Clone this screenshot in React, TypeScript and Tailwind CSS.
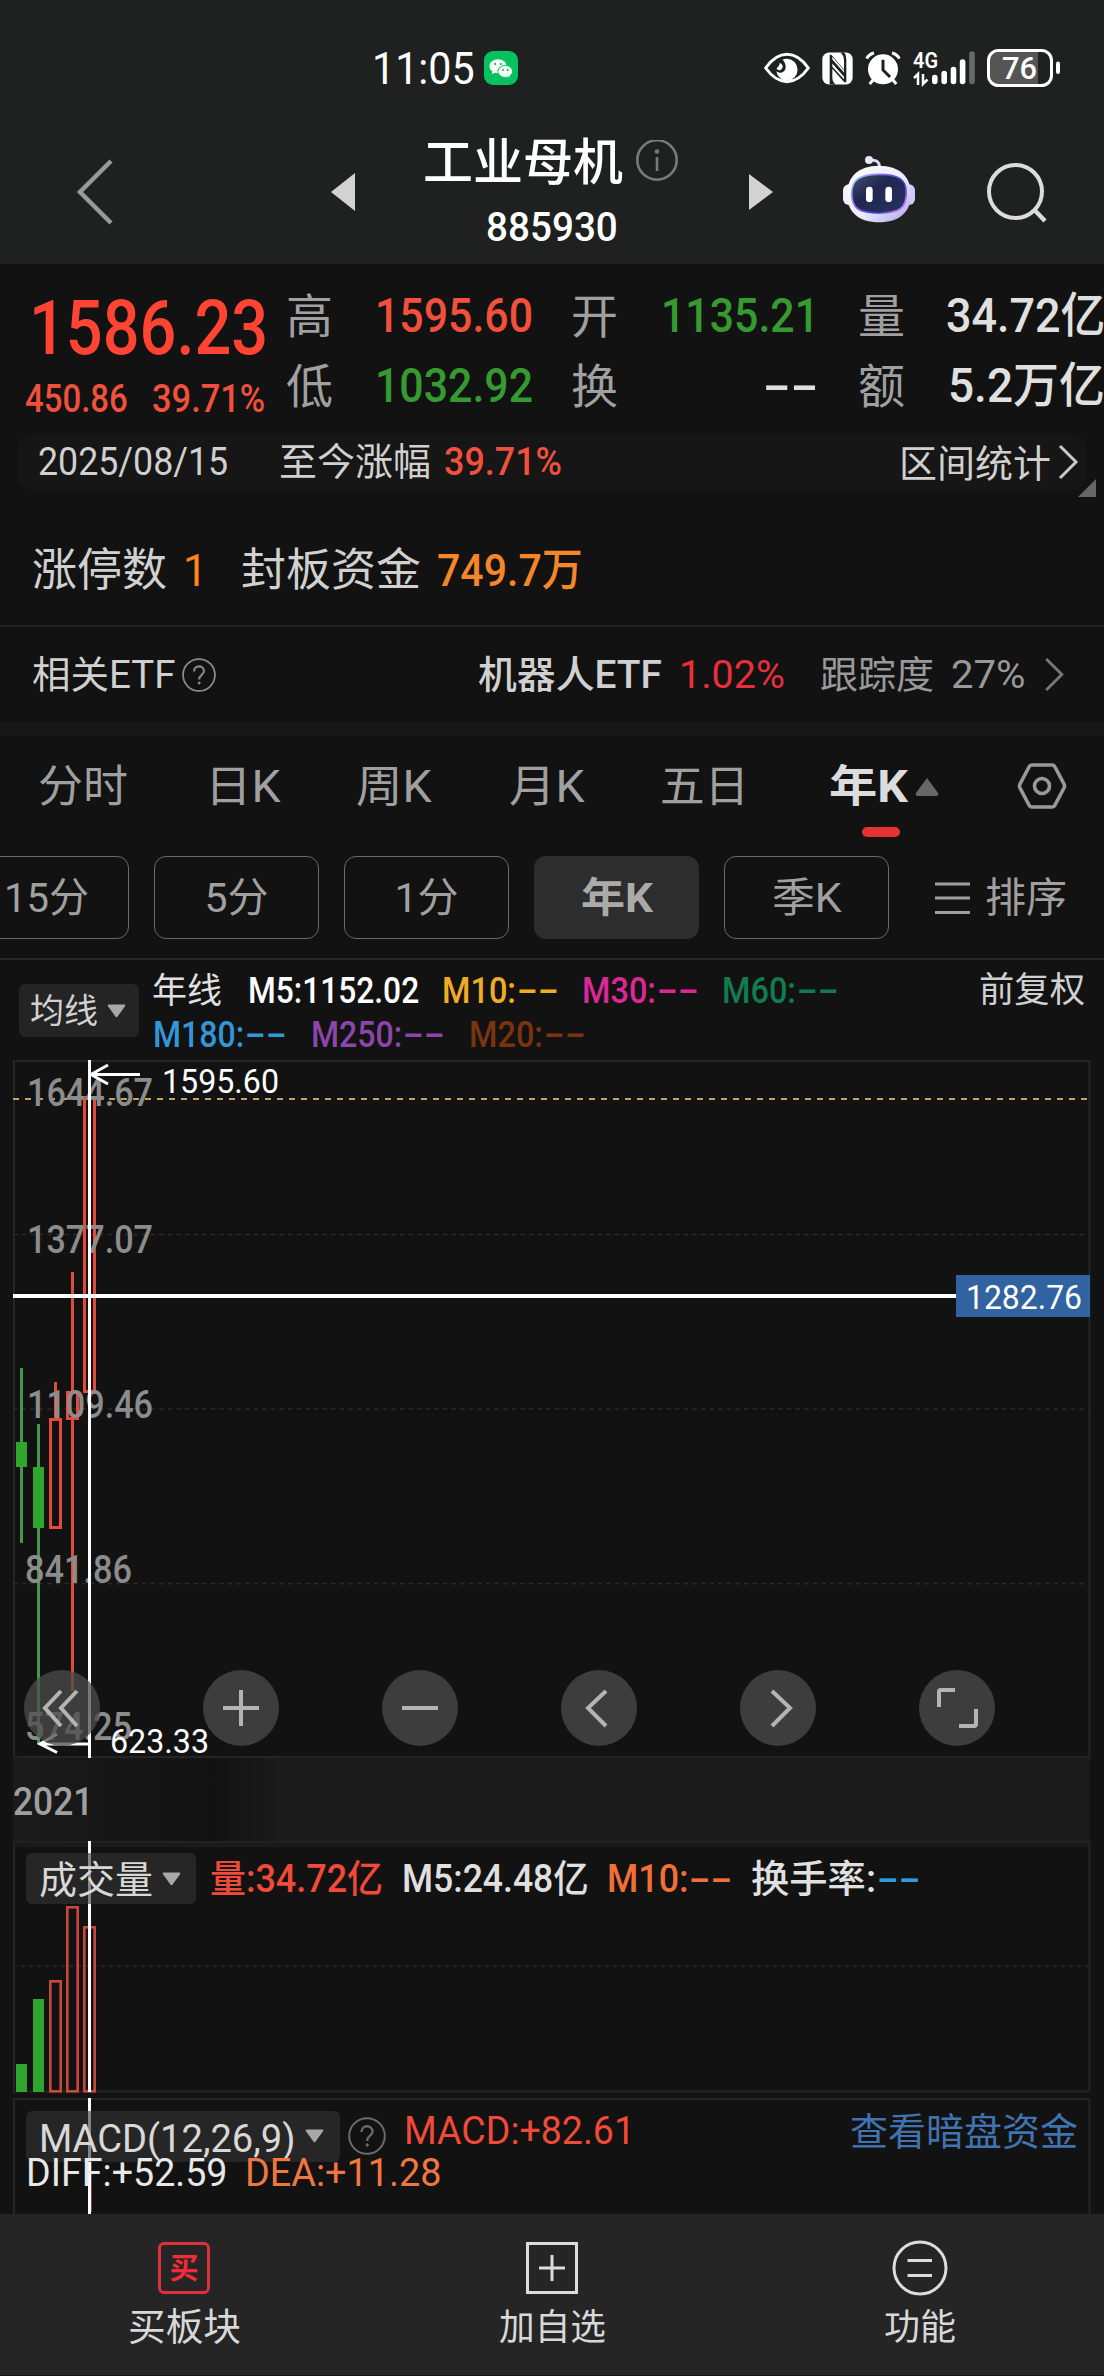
import React, { useLayoutEffect, useRef, useState } from 'react';
import clsx from 'clsx';

// Text squeezed or stretched to the width of its box, like the app's narrow number font
const Fit = ({ className, children }: { className?: string; children: React.ReactNode }) => {
  const box = useRef<HTMLSpanElement>(null);
  const text = useRef<HTMLSpanElement>(null);
  const [scale, setScale] = useState(1);

  useLayoutEffect(() => {
    if (box.current && text.current && text.current.offsetWidth) {
      setScale(box.current.offsetWidth / text.current.offsetWidth);
    }
  }, [children]);

  return (
    <span ref={box} className={clsx('block shrink-0 leading-none whitespace-nowrap', className)}>
      <span ref={text} className="inline-block origin-left align-top" style={{ transform: `scaleX(${scale})` }}>
        {children}
      </span>
    </span>
  );
};

const Chevron = ({ className }: { className?: string }) => (
  <svg className={clsx('shrink-0', className)} viewBox="0 0 22 36" fill="none" stroke="currentColor" strokeWidth="3">
    <path d="M2 2 L18 18 L2 34" />
  </svg>
);

const Caret = ({ className }: { className?: string }) => (
  <svg className={clsx('shrink-0', className)} width="19" height="14" viewBox="0 0 19 14">
    <path d="M1.5 .5 H17.5 Q19 .8 18 2.3 L10.6 12.6 Q9.5 14 8.4 12.6 L1 2.3 Q0 .8 1.5 .5Z" fill="#a8a8a8" />
  </svg>
);

const Question = ({ className }: { className?: string }) => (
  <svg className={clsx('shrink-0', className)} viewBox="0 0 38 38" fill="none" stroke="currentColor" strokeWidth="2">
    <circle cx="19" cy="19" r="17.8" />
    <path d="M13.5 15 C13.5 7.5 24.5 7.5 24.5 14.5 C24.5 19 19.2 18.5 19.2 24" strokeWidth="2.4" />
    <circle cx="19.2" cy="28" r="1.2" fill="currentColor" strokeWidth="1" />
  </svg>
);

const StatusBar = () => (
  <div className="flex h-[136px] items-center text-white">
    <Fit className="mt-px ml-[372px] w-[103px] text-[44px]">11:05</Fit>
    <svg className="ml-[9px] shrink-0" width="34" height="34" viewBox="0 0 34 34">
      <rect width="34" height="34" rx="9" fill="#07c160" />
      <path d="M14 8.2c-4.8 0-8.5 3.1-8.5 7 0 2.200 1.200 4.100 3 5.400l-.7 2.600 3-1.500c1 .3 2 .5 3.200.5 4.800 0 8.500-3.100 8.500-7s-3.700-7-8.500-7z" fill="#f4fff8" />
      <path d="M21.300 14.400c-4.100 0-7.300 2.700-7.300 6s3.200 6 7.300 6c.9 0 1.800-.1 2.600-.4l2.400 1.300-.6-2.200c1.800-1.100 2.900-2.800 2.900-4.700 0-3.300-3.200-6-7.300-6z" fill="#f4fff8" stroke="#07c160" />
      <g fill="#07a050">
        <circle cx="11.200" cy="13" r="1" />
        <circle cx="16.800" cy="13" r="1" />
        <circle cx="19" cy="19" r=".9" />
        <circle cx="23.700" cy="19" r=".9" />
      </g>
    </svg>
    <svg className="ml-[246px] shrink-0" width="46" height="32" viewBox="0 0 138 96">
      <path d="M5 48 C25 20 47 7 69 7 S113 20 133 48 C113 76 91 89 69 89 S25 76 5 48Z" fill="none" stroke="#fff" strokeWidth="9" />
      <path d="M70 20 A32 33 0 1 1 37 58 C48 67 66 60 65 44 C65 34 60 26 55 23 A32 32 0 0 1 70 20Z" fill="#fff" />
      <path d="M47 33 C58 37 59 47 51 53 C45 57 39 54 38 48 C42 46 46 42 47 33Z" fill="#fff" />
    </svg>
    <svg className="ml-[12px] shrink-0" width="31" height="33" viewBox="0 0 93 98">
      <rect x="1" y="1" width="91" height="96" rx="20" fill="#fff" />
      <path d="M23 97 V12 Q23 3 30 10 L66 52 V25 Q66 10 55 1 H67 Q73 8 73 22 V86 Q73 95 64 87 L31 50 V75 Q31 90 42 97Z" fill="#1f2120" />
      <path d="M31 14 L66 54 V61 L31 22Z M31 34 L66 74 V81 L31 44Z" fill="#fff" />
    </svg>
    <svg className="ml-[12px] shrink-0" width="37" height="34" viewBox="0 0 111 102">
      <circle cx="54" cy="55" r="45" fill="#fff" />
      <path d="M5 23 Q12 9 27 6 M103 23 Q96 9 81 6 M25 86 L14 99 M83 86 L94 99" stroke="#fff" strokeWidth="9" fill="none" />
      <path d="M54 26 V57 L75 78" stroke="#1f2120" strokeWidth="9" fill="none" />
    </svg>
    <svg className="ml-[10px] shrink-0 overflow-visible" width="64" height="36" viewBox="0 0 64 36">
      <text x="1" y="17.500" fontSize="22" fontWeight="600" fill="#fff" textLength="25" lengthAdjust="spacingAndGlyphs">4G</text>
      <path d="M2 28 L6 24 V35 M11 24 V34 L15.500 29.500" fill="none" stroke="#fff" strokeWidth="2.500" />
      <g stroke="#fff" strokeWidth="5.600" strokeLinecap="round">
        <path d="M22.800 27.500 V31.500 M32.200 23.500 V31.500 M41.500 19.500 V31.500 M50.600 12 V31.500" />
        <path d="M60 4 V31.500" stroke="#686868" />
      </g>
    </svg>
    <svg className="ml-[11px] shrink-0" width="75" height="38" viewBox="0 0 75 38">
      <path d="M51 3 H13 Q3 3 3 13 V25 Q3 35 13 35 H51Z" fill="#555" />
      <rect x="1.500" y="1.500" width="63" height="35" rx="10" fill="none" stroke="#fff" strokeWidth="3" />
      <path d="M71 14.500 V23" stroke="#fff" strokeWidth="4" strokeLinecap="round" />
      <text x="15" y="30" fontSize="31" fontWeight="500" fill="#fff" textLength="35" lengthAdjust="spacingAndGlyphs">76</text>
    </svg>
  </div>
);

const Robot = () => (
  <svg className="mb-[6px] ml-[70px] shrink-0" width="72" height="68" viewBox="0 0 216 204">
    <defs>
      <linearGradient id="shell" x1="0" y1="0" x2="1" y2="1">
        <stop offset="0" stopColor="#ffffff" />
        <stop offset=".55" stopColor="#eeeaff" />
        <stop offset="1" stopColor="#aaa2ea" />
      </linearGradient>
      <linearGradient id="rim" x1="0" y1="0" x2="1" y2=".6">
        <stop offset="0" stopColor="#9fe6ff" />
        <stop offset=".45" stopColor="#8a5bea" />
        <stop offset=".8" stopColor="#2f3bb8" />
        <stop offset="1" stopColor="#b26cf0" />
      </linearGradient>
      <linearGradient id="visor" x1="0" y1="0" x2="1" y2="1">
        <stop offset="0" stopColor="#46506f" />
        <stop offset=".4" stopColor="#1e2850" />
        <stop offset="1" stopColor="#283260" />
      </linearGradient>
    </defs>
    <path d="M84 16 Q108 12 110 36" fill="none" stroke="#dedbf5" strokeWidth="9" />
    <circle cx="78" cy="15" r="12" fill="#e9e8fb" />
    <rect x="0" y="88" width="40" height="62" rx="18" fill="#f3f1ff" />
    <rect x="176" y="88" width="40" height="62" rx="18" fill="#cfcaf6" />
    <path d="M108 32 C170 32 204 66 204 118 C204 172 168 202 108 202 S12 172 12 118 C12 66 46 32 108 32Z" fill="url(#shell)" />
    <path d="M108 58 C164 58 190 72 190 115 C190 162 166 174 108 174 S26 162 26 115 C26 72 52 58 108 58Z" fill="url(#visor)" stroke="url(#rim)" strokeWidth="5" />
    <rect x="69" y="95" width="20" height="46" rx="10" fill="#fff" />
    <rect x="127" y="95" width="20" height="46" rx="10" fill="#fff" />
  </svg>
);

const NavBar = () => (
  <div className="flex h-[128px] items-center pb-4">
    <svg className="ml-[76px] shrink-0" width="37" height="66" viewBox="0 0 37 66" fill="none" stroke="#999" strokeWidth="4.500">
      <path d="M35 2 L4 33 L35 64" />
    </svg>
    <svg className="ml-[218px] shrink-0" width="25" height="38" viewBox="0 0 25 38">
      <path d="M24 0 V38 L0 19Z" fill="#d2d2d2" />
    </svg>
    <div className="ml-[67px] flex h-[112px] w-[256px] shrink-0 flex-col items-center text-white">
      <div className="flex h-[54px] w-full items-center">
        <Fit className="mt-[2px] w-[200px] text-[50px] font-medium">工业母机</Fit>
        <svg className="ml-[12px] shrink-0" width="44" height="44" viewBox="0 0 44 44" fill="none" stroke="#7a7a7a" strokeWidth="2.600">
          <circle cx="22" cy="20" r="19.700" />
          <path d="M22 17 V31" />
          <circle cx="22" cy="11.500" r="1" fill="#7a7a7a" />
        </svg>
      </div>
      <Fit className="mt-[19px] ml-[2px] w-[132px] text-[41px] font-medium">885930</Fit>
    </div>
    <svg className="ml-[70px] shrink-0" width="24" height="38" viewBox="0 0 24 38">
      <path d="M0 1 V37 L24 19Z" fill="#d2d2d2" />
    </svg>
    <Robot />
    <svg className="mt-[2px] ml-[71px] shrink-0" width="62" height="62" viewBox="0 0 62 62" fill="none" stroke="#dcdcdc" strokeWidth="4">
      <circle cx="29.500" cy="29.500" r="26.500" />
      <path d="M48.500 48 L59 59" strokeWidth="4.500" />
    </svg>
  </div>
);

const Quote = () => (
  <div className="flex h-[171px] pt-[17px] font-medium">
    <div className="w-[286px] shrink-0 text-[#f0503c]">
      <Fit className="mt-[9px] ml-[29px] w-[239px] text-[76px] text-[#ff4433]">1586.23</Fit>
      <div className="mt-[13px] flex h-[40px] items-center text-[39px]">
        <Fit className="ml-[25px] w-[103px]">450.86</Fit>
        <Fit className="ml-[24px] w-[113px]">39.71%</Fit>
      </div>
    </div>
    <div className="grid shrink-0 grid-cols-[46px_246px_46px_246px_46px_188px] grid-rows-[70px_70px] items-center text-[48px] text-[#a0a0a0]">
      <Fit className="w-[47px] text-[47px] font-normal">高</Fit>
      <Fit className="ml-[43px] w-[158px] text-[#f0503c]">1595.60</Fit>
      <Fit className="-ml-[7px] w-[47px] text-[47px] font-normal">开</Fit>
      <Fit className="ml-[37px] w-[158px] text-[#359a30]">1135.21</Fit>
      <Fit className="-ml-[12px] w-[47px] text-[47px] font-normal">量</Fit>
      <Fit className="ml-[30px] w-[159px] text-[#e0e0e0]">34.72亿</Fit>
      <Fit className="w-[47px] text-[47px] font-normal">低</Fit>
      <Fit className="ml-[43px] w-[158px] text-[#359a30]">1032.92</Fit>
      <Fit className="-ml-[7px] w-[47px] text-[47px] font-normal">换</Fit>
      <Fit className="ml-[139px] w-[56px] text-[#e0e0e0]">--</Fit>
      <Fit className="-ml-[12px] w-[47px] text-[47px] font-normal">额</Fit>
      <Fit className="ml-[32px] w-[157px] text-[#e0e0e0]">5.2万亿</Fit>
    </div>
  </div>
);

const DateStrip = () => (
  <div className="relative mx-[19px] flex h-[54px] items-center rounded-lg bg-[#161616] text-[38px] text-[#d0d0d0]">
    <Fit className="ml-[19px] w-[190px]">2025/08/15</Fit>
    <Fit className="ml-[51px] w-[152px]">至今涨幅</Fit>
    <Fit className="ml-[13px] w-[118px] font-medium text-[#f0503c]">39.71%</Fit>
    <Fit className="mt-[3px] ml-[337px] w-[152px]">区间统计</Fit>
    <Chevron className="ml-[7px] h-[36px] w-[22px] text-[#c8c8c8]" />
    <svg className="absolute -right-[11px] -bottom-[8px]" width="18" height="18" viewBox="0 0 18 18">
      <path d="M18 0 V18 H0Z" fill="#666" />
    </svg>
  </div>
);

const LimitRow = () => (
  <div className="flex h-[136px] items-center pt-[27px] text-[45px] text-[#d0d0d0]">
    <Fit className="ml-[32px] w-[135px]">涨停数</Fit>
    <Fit className="ml-[16px] w-[24px] text-[#ff8420]">1</Fit>
    <Fit className="ml-[34px] w-[180px]">封板资金</Fit>
    <Fit className="ml-[16px] w-[146px] font-medium text-[#f5862a]">749.7万</Fit>
  </div>
);

const EtfRow = () => (
  <div className="flex h-[97px] items-center border-t-2 border-[#202020] text-[38px] text-[#d0d0d0]">
    <Fit className="ml-[32px] w-[144px]">相关ETF</Fit>
    <Question className="ml-[6px] h-[34px] w-[34px] text-[#8a8a8a]" />
    <Fit className="ml-[262px] w-[184px] font-medium">机器人ETF</Fit>
    <Fit className="ml-[17px] w-[106px] text-[#e8303c]">1.02%</Fit>
    <Fit className="ml-[35px] w-[114px] text-[#999]">跟踪度</Fit>
    <Fit className="ml-[17px] w-[75px] text-[#999]">27%</Fit>
    <Chevron className="ml-[18px] h-[35px] w-[22px] text-[#777]" />
  </div>
);

const Tabs = () => (
  <div className="flex h-[102px] items-center pt-[2px] text-[44px] text-[#a0a0a0]">
    <Fit className="ml-[38px] w-[90px]">分时</Fit>
    <Fit className="ml-[77px] w-[76px]">日K</Fit>
    <Fit className="ml-[75px] w-[76px]">周K</Fit>
    <Fit className="ml-[77px] w-[76px]">月K</Fit>
    <Fit className="ml-[75px] w-[89px]">五日</Fit>
    <div className="relative ml-[80px] flex items-center">
      <Fit className="w-[79px] font-bold text-[#dcdcdc]">年K</Fit>
      <svg className="ml-[7px]" width="24" height="18" viewBox="0 0 24 18">
        <path d="M12 0 L23 15 Q24 18 21 18 H3 Q0 18 1 15Z" fill="#686868" />
      </svg>
      <i className="absolute top-[62px] left-[33px] h-[10px] w-[38px] rounded-[5px] bg-[#e63232]" />
    </div>
    <svg className="-mt-[2px] ml-[78px] shrink-0" width="50" height="48" viewBox="0 0 50 48" fill="none" stroke="#999" strokeWidth="3.600">
      <path d="M15 3 H35 Q37 3 38 5 L47 22 Q48 24 47 26 L38 43 Q37 45 35 45 H15 Q13 45 12 43 L3 26 Q2 24 3 22 L12 5 Q13 3 15 3Z" />
      <circle cx="25" cy="24" r="7.500" />
    </svg>
  </div>
);

const pill = 'flex h-[83px] w-[165px] shrink-0 items-center justify-center rounded-[12px] pt-[2px]';

const Periods = () => (
  <div className="flex h-[121px] gap-[25px] overflow-hidden pt-[19px] text-[41px] text-[#a0a0a0]">
    <div className={clsx(pill, '-ml-[36px] border-[1.5px] border-[#6a6a6a]')}>
      <Fit className="w-[85px]">15分</Fit>
    </div>
    <div className={clsx(pill, 'border-[1.5px] border-[#6a6a6a]')}>
      <Fit className="w-[64px]">5分</Fit>
    </div>
    <div className={clsx(pill, 'border-[1.5px] border-[#6a6a6a]')}>
      <Fit className="w-[64px]">1分</Fit>
    </div>
    <div className={clsx(pill, 'bg-[#2d2d2d] font-bold text-[#aaa]')}>
      <Fit className="w-[72px]">年K</Fit>
    </div>
    <div className={clsx(pill, 'border-[1.5px] border-[#6a6a6a]')}>
      <Fit className="w-[70px]">季K</Fit>
    </div>
    <div className="ml-[21px] flex h-[83px] items-center">
      <svg width="36" height="34" viewBox="0 0 36 34" stroke="#a0a0a0" strokeWidth="3">
        <path d="M0 3 H35 M0 17 H35 M0 31.500 H35" />
      </svg>
      <Fit className="mt-[2px] ml-[14px] w-[82px]">排序</Fit>
    </div>
  </div>
);

const Legend = () => (
  <div className="flex h-[102px] border-t-2 border-[#2a2a2a] text-[36px] font-medium">
    <div className="mt-[24px] ml-[19px] flex h-[53px] w-[120px] shrink-0 items-center rounded-[6px] bg-[#242424]">
      <Fit className="ml-[11px] w-[68px] text-[34px] font-normal text-[#d0d0d0]">均线</Fit>
      <Caret className="ml-[9px]" />
    </div>
    <div className="w-[840px] shrink-0 pt-[9px]">
      <div className="flex h-[44px] items-center">
        <Fit className="ml-[13px] w-[70px] text-[35px] font-normal text-[#e0e0e0]">年线</Fit>
        <Fit className="ml-[26px] w-[171px] text-white">M5:1152.02</Fit>
        <div className="ml-[23px] flex gap-px text-[#f0ac24]">
          <Fit className="w-[74px]">M10:</Fit>
          <Fit className="w-[41px]">--</Fit>
        </div>
        <div className="ml-[24px] flex gap-px text-[#dc2896]">
          <Fit className="w-[74px]">M30:</Fit>
          <Fit className="w-[41px]">--</Fit>
        </div>
        <div className="ml-[24px] flex gap-px text-[#107c50]">
          <Fit className="w-[74px]">M60:</Fit>
          <Fit className="w-[41px]">--</Fit>
        </div>
      </div>
      <div className="flex h-[44px] items-center">
        <div className="ml-[14px] flex gap-px text-[#3296d8]">
          <Fit className="w-[91px]">M180:</Fit>
          <Fit className="w-[41px]">--</Fit>
        </div>
        <div className="ml-[25px] flex gap-px text-[#8a46aa]">
          <Fit className="w-[91px]">M250:</Fit>
          <Fit className="w-[41px]">--</Fit>
        </div>
        <div className="ml-[25px] flex gap-px text-[#7a3410]">
          <Fit className="w-[74px]">M20:</Fit>
          <Fit className="w-[41px]">--</Fit>
        </div>
      </div>
    </div>
    <Fit className="mt-[13px] w-[106px] text-[35px] font-normal text-[#d0d0d0]">前复权</Fit>
  </div>
);

// Candles, x is the centre of each one
const candles = [
  { x: 21.5, high: 308, low: 483, top: 382, bottom: 407, up: false },
  { x: 38.5, high: 364, low: 684, top: 407, bottom: 468, up: false },
  { x: 55.5, high: 322, low: 468, top: 358, bottom: 469, up: true },
  { x: 72.5, high: 212, low: 631, top: 331, bottom: 360, up: true },
  { x: 89.5, high: 36, low: 398, top: 36, bottom: 333, up: true },
];

const priceLabels = [
  { text: '1644.67', x: 27, y: 46, w: 126 },
  { text: '1377.07', x: 27, y: 193, w: 126 },
  { text: '1109.46', x: 27, y: 358, w: 126 },
  { text: '841.86', x: 25, y: 523, w: 107 },
  { text: '574.25', x: 25, y: 680, w: 107 },
];

const controls = [
  'M37 21 L21 38 L37 56 M53 21 L37 38 L53 56',
  'M20 38 H56 M38 20 V56',
  'M20 38 H56',
  'M45 21 L27 38 L45 56',
  'M32 21 L50 38 L32 56',
  'M36 20 H22 Q20 20 20 22 V37 M57 39 V54 Q57 56 55 56 H40',
];

const PriceChart = () => (
  <div className="relative h-[698px]">
    <svg className="block" width="1104" height="698" viewBox="0 0 1104 698">
      <path d="M13 1 H1090 M14 0 V698 M1089.500 0 V698 M13 697 H1090" stroke="#242424" strokeWidth="2" />
      <path d="M13 174.500 H1090 M13 349 H1090 M13 523.500 H1090" stroke="#2b2b2b" strokeWidth="1.400" strokeDasharray="4.300 4.300" />
      <path d="M13 39 H1090" stroke="#c0a266" strokeWidth="2" strokeDasharray="6 6" />
      {candles.map((c) =>
        c.up ? (
          <g key={c.x} fill="none" stroke="#e04b3b" strokeWidth="3">
            <path d={`M${c.x} ${c.high} V${c.top} M${c.x} ${c.bottom} V${Math.max(c.low, c.bottom)}`} />
            <rect x={c.x - 5} y={c.top + 1.5} width="10" height={c.bottom - c.top - 3} />
          </g>
        ) : (
          <g key={c.x}>
            <path d={`M${c.x} ${c.high} V${c.low}`} stroke="#43984a" strokeWidth="3" />
            <rect x={c.x - 5.5} y={c.top} width="11" height={c.bottom - c.top} fill="#2fa530" />
          </g>
        )
      )}
      <g fill="#8c8c8c" fontSize="38" fontWeight="500">
        {priceLabels.map((l) => (
          <text key={l.text} x={l.x} y={l.y} textLength={l.w} lengthAdjust="spacingAndGlyphs">{l.text}</text>
        ))}
      </g>
      <g fill="none" stroke="#fff" strokeWidth="3">
        <path d="M91 14.500 H140 M108 5 L91 14.500 L108 24" />
        <path d="M40 684 H89 M57 674 L40 684 L57 692.500" />
        <path d="M89.500 0 V698" />
        <path d="M13 236 H957" strokeWidth="4" />
      </g>
      <g fill="#fff" fontSize="34">
        <text x="162" y="33" textLength="117" lengthAdjust="spacingAndGlyphs">1595.60</text>
        <text x="110" y="693" textLength="99" lengthAdjust="spacingAndGlyphs">623.33</text>
        <rect x="956" y="215" width="134" height="42" fill="#3163a0" />
        <text x="966" y="249" textLength="116" lengthAdjust="spacingAndGlyphs">1282.76</text>
      </g>
    </svg>
    <div className="absolute top-[610px] left-[24px] flex gap-[103px]">
      {controls.map((d) => (
        <button key={d} className="h-[76px] w-[76px] rounded-full bg-[#4c4c4c]/75">
          <svg width="76" height="76" viewBox="0 0 76 76" fill="none" stroke="#b4b4b4" strokeWidth="4">
            <path d={d} />
          </svg>
        </button>
      ))}
    </div>
  </div>
);

const YearAxis = () => (
  <div className="mr-[14px] ml-[13px] flex h-[83px] items-center bg-[#1b1b1b] bg-linear-to-r from-[#1b1b1b] from-[0%] via-[#121212] via-[18.500%] to-[#1b1b1b] to-[25%] text-[38px] font-medium text-[#a0a0a0]">
    <Fit className="mt-[5px] w-[80px]">2021</Fit>
  </div>
);

const VolumeChart = () => (
  <div className="relative h-[256px]">
    <svg className="block" width="1104" height="256" viewBox="0 0 1104 256">
      <rect x="13" y="0" width="1077" height="6" fill="#1a1a1a" />
      <path d="M13 .5 H1090 M14 0 V251 M1089.500 0 V251 M13 250.500 H1090" stroke="#242424" strokeWidth="2" />
      <path d="M13 125 H1090" stroke="#242424" strokeWidth="2" strokeDasharray="4 4" />
      <path d="M16 223 H27 V251 H16Z M33 158 H44 V251 H33Z" fill="#2fa530" />
      <g fill="none" stroke="#c9483c" strokeWidth="2.600">
        <rect x="50.300" y="140.300" width="10.400" height="110" />
        <rect x="67.300" y="66.300" width="10.400" height="184" />
        <rect x="84.300" y="86.300" width="10.400" height="164" />
      </g>
      <path d="M89.500 0 V251" stroke="#fff" strokeWidth="3" />
    </svg>
    <div className="absolute top-[12px] left-[26px] flex h-[51px] items-center text-[38px] font-medium">
      <div className="flex h-[51px] w-[170px] items-center rounded-[6px] bg-[#343434]/60 text-[#d8d8d8]">
        <Fit className="mt-[2px] ml-[13px] w-[114px] font-normal">成交量</Fit>
        <Caret className="ml-[9px]" />
      </div>
      <Fit className="ml-[14px] w-[173px] text-[#f04a38]">量:34.72亿</Fit>
      <Fit className="ml-[19px] w-[187px] text-[#e0e0e0]">M5:24.48亿</Fit>
      <div className="ml-[18px] flex gap-px text-[#f07038]">
        <Fit className="w-[81px]">M10:</Fit>
        <Fit className="w-[44px]">--</Fit>
      </div>
      <Fit className="ml-[18px] w-[125px] text-[#e0e0e0]">换手率:</Fit>
      <Fit className="ml-[1px] w-[44px] text-[#2f9be0]">--</Fit>
    </div>
  </div>
);

const MacdPanel = () => (
  <div className="relative h-[117px]">
    <svg className="block" width="1104" height="117" viewBox="0 0 1104 117">
      <path d="M13 2 H1090 M14 1 V117 M1089.500 1 V117" stroke="#242424" strokeWidth="2" />
      <path d="M91.300 60 V115" stroke="#a05048" strokeWidth="1" />
      <path d="M89.500 1 V117" stroke="#fff" strokeWidth="3" />
    </svg>
    <div className="absolute top-[14px] left-[26px] flex h-[51px] text-[38px]">
      <div className="flex h-[51px] w-[314px] shrink-0 items-center rounded-[6px] bg-[#343434]/60 text-[#d8d8d8]">
        <Fit className="mt-[5px] ml-[13px] w-[256px] text-[39px]">MACD(12,26,9)</Fit>
        <Caret className="-mt-[2px] ml-[10px]" />
      </div>
      <Question className="mt-[6px] ml-[8px] h-[38px] w-[38px] text-[#6a6a6a]" />
      <Fit className="mt-px ml-[18px] w-[231px] text-[#f04a38]">MACD:+82.61</Fit>
      <Fit className="mt-[2px] ml-[215px] w-[228px] text-[#4173b0]">查看暗盘资金</Fit>
    </div>
    <div className="absolute top-[57px] left-[26px] flex text-[38px]">
      <Fit className="w-[202px] text-[#e8e8e8]">DIFF:+52.59</Fit>
      <Fit className="ml-[17px] w-[197px] text-[#f07840]">DEA:+11.28</Fit>
    </div>
  </div>
);

const BottomBar = () => (
  <div className="flex h-[161px] bg-[#252525] text-[38px] text-[#d8d8d8]">
    <div className="flex flex-1 flex-col items-center pt-[28px]">
      <div className="flex h-[52px] w-[52px] items-center justify-center rounded-[6px] border-[3px] border-[#e0303c] text-[#f02c3a]">
        <span className="mt-[2px] text-[29px] leading-[29px] font-bold">买</span>
      </div>
      <Fit className="mt-[14px] w-[113px]">买板块</Fit>
    </div>
    <div className="flex flex-1 flex-col items-center pt-[28px]">
      <svg width="52" height="52" viewBox="0 0 52 52" fill="none" stroke="#dcdcdc" strokeWidth="3">
        <path d="M1.500 1.500 H50.500 V50.500 H1.500Z M13 26 H39 M26 13 V39" />
      </svg>
      <Fit className="mt-[16px] w-[107px] text-[36px]">加自选</Fit>
    </div>
    <div className="flex flex-1 flex-col items-center pt-[26px]">
      <svg width="56" height="56" viewBox="0 0 56 56" fill="none" stroke="#dcdcdc" strokeWidth="3">
        <circle cx="28" cy="28" r="26" />
        <path d="M15.500 20.500 H40 M15.500 35.500 H40" />
      </svg>
      <Fit className="mt-[14px] w-[72px] text-[36px]">功能</Fit>
    </div>
  </div>
);

const App = () => {
  return (
    <div className="h-[2376px] w-[1104px] overflow-hidden bg-[#121212] font-['Roboto','Noto_Sans_CJK_SC',sans-serif]">
      <div className="bg-[#1f2120]">
        <StatusBar />
        <NavBar />
      </div>
      <Quote />
      <DateStrip />
      <LimitRow />
      <EtfRow />
      <div className="h-[13px] bg-[#171717]" />
      <Tabs />
      <Periods />
      <Legend />
      <PriceChart />
      <YearAxis />
      <VolumeChart />
      <MacdPanel />
      <BottomBar />
    </div>
  );
};

export default App;
